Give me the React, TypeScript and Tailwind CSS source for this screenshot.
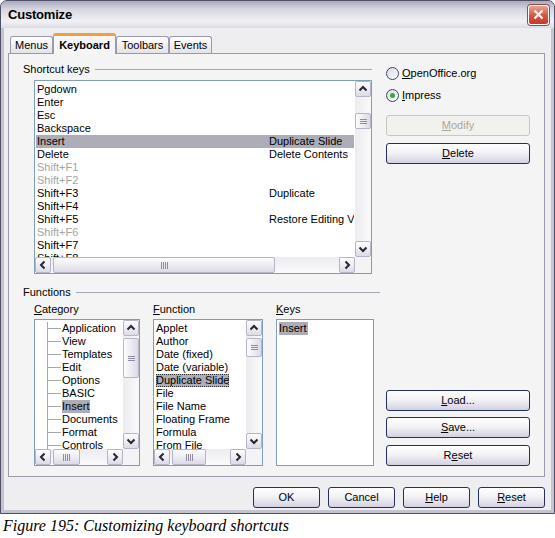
import React from "react";

type Dir = "up" | "down" | "left" | "right";

const arrowPath: Record<Dir, string> = {
  up: "M3.5 8.5 L7 5 L10.5 8.5",
  down: "M3.5 5.5 L7 9 L10.5 5.5",
  left: "M8.5 3.5 L5 7 L8.5 10.5",
  right: "M5.5 3.5 L9 7 L5.5 10.5",
};

function ScrollButton({ dir }: { dir: Dir }) {
  return (
    <div className="w-[16px] h-[16px] shrink-0 flex items-center justify-center rounded-[2px] border border-[#b6b5c8] bg-[linear-gradient(to_bottom,#ffffff,#dcdbe6)]">
      <svg width="14" height="14" viewBox="0 0 14 14">
        <path d={arrowPath[dir]} fill="none" stroke="#262633" strokeWidth="2" />
      </svg>
    </div>
  );
}

function VScroll({ thumb }: { thumb: string }) {
  return (
    <div className="w-[16px] h-full shrink-0 flex flex-col bg-[linear-gradient(to_right,#ececf0,#fafafb)]">
      <ScrollButton dir="up" />
      <div
        className={`w-[16px] shrink-0 rounded-[2px] border border-[#b6b5c8] bg-[linear-gradient(to_right,#fdfdfe,#dcdbe6)] flex flex-col items-center justify-center gap-[1px] ${thumb}`}
      >
        <div className="w-[7px] h-px bg-[#8c8c9c]" />
        <div className="w-[7px] h-px bg-[#8c8c9c]" />
        <div className="w-[7px] h-px bg-[#8c8c9c]" />
      </div>
      <div className="flex-1" />
      <ScrollButton dir="down" />
    </div>
  );
}

function HScroll({ thumb }: { thumb: string }) {
  return (
    <div className="h-[16px] flex-1 flex bg-[linear-gradient(to_bottom,#ececf0,#fafafb)]">
      <ScrollButton dir="left" />
      <div
        className={`h-[16px] shrink-0 rounded-[2px] border border-[#b6b5c8] bg-[linear-gradient(to_bottom,#fdfdfe,#dcdbe6)] flex items-center justify-center gap-[1px] ${thumb}`}
      >
        <div className="h-[7px] w-px bg-[#8c8c9c]" />
        <div className="h-[7px] w-px bg-[#8c8c9c]" />
        <div className="h-[7px] w-px bg-[#8c8c9c]" />
        <div className="h-[7px] w-px bg-[#8c8c9c]" />
      </div>
      <div className="flex-1" />
      <ScrollButton dir="right" />
    </div>
  );
}

function XpButton({
  children,
  disabled,
  className = "",
}: {
  children: React.ReactNode;
  disabled?: boolean;
  className?: string;
}) {
  return (
    <div
      className={`h-[21px] shrink-0 flex items-center justify-center rounded-[3px] border ${
        disabled
          ? "border-[#c9c8c0] bg-[#f1f1ed] text-[#aca899]"
          : "border-[#24305e] bg-[linear-gradient(to_bottom,#ffffff_0%,#f3f3f6_45%,#d3d1e2_100%)] text-black"
      } ${className}`}
    >
      {children}
    </div>
  );
}

function Radio({ checked, children }: { checked?: boolean; children: React.ReactNode }) {
  return (
    <div className="flex items-center h-[14px] gap-[3px]">
      <div className="w-[13px] h-[13px] rounded-full border border-[#34496e] bg-[linear-gradient(135deg,#d8d8e2,#ffffff)] flex items-center justify-center">
        {checked && <div className="w-[5px] h-[5px] rounded-full bg-[#3aa83a]" />}
      </div>
      <span>{children}</span>
    </div>
  );
}

function Header({ label, className }: { label: string; className: string }) {
  return (
    <div className={`flex items-center h-[14px] ${className}`}>
      <span className="whitespace-nowrap">{label}</span>
      <div className="flex-1 ml-[5px] h-px bg-[#a6a6b4]" />
    </div>
  );
}

const shortcuts: { key: string; fn?: string; sel?: boolean; dis?: boolean }[] = [
  { key: "Pgdown" },
  { key: "Enter" },
  { key: "Esc" },
  { key: "Backspace" },
  { key: "Insert", fn: "Duplicate Slide", sel: true },
  { key: "Delete", fn: "Delete Contents" },
  { key: "Shift+F1", dis: true },
  { key: "Shift+F2", dis: true },
  { key: "Shift+F3", fn: "Duplicate" },
  { key: "Shift+F4" },
  { key: "Shift+F5", fn: "Restore Editing View" },
  { key: "Shift+F6", dis: true },
  { key: "Shift+F7" },
  { key: "Shift+F8" },
];

const categories = [
  "Application",
  "View",
  "Templates",
  "Edit",
  "Options",
  "BASIC",
  "Insert",
  "Documents",
  "Format",
  "Controls",
];

const functions = [
  "Applet",
  "Author",
  "Date (fixed)",
  "Date (variable)",
  "Duplicate Slide",
  "File",
  "File Name",
  "Floating Frame",
  "Formula",
  "From File",
];

const tabs = [
  { label: "Menus", w: "w-[43px]" },
  { label: "Keyboard", w: "w-[63px]", active: true },
  { label: "Toolbars", w: "w-[53px]" },
  { label: "Events", w: "w-[43px]" },
];

export default function App() {
  return (
    <div className="w-[555px] h-[538px] bg-white font-['Liberation_Sans',Arial,sans-serif] text-[11px] leading-[13px] text-black overflow-hidden">
      {/* window */}
      <div className="w-[555px] h-[514px] flex flex-col border border-[#4f4f66] rounded-t-[7px] overflow-hidden bg-[#c4c4d0]">
        <div className="h-[27px] shrink-0 flex items-center justify-between pl-[7px] pr-[5px] bg-[linear-gradient(to_bottom,#a9a8be_0%,#d6d6e0_30%,#f1f1f5_75%,#dcdce4_100%)]">
          <span className="text-[13px] font-bold tracking-[-0.2px]">Customize</span>
          <div className="w-[21px] h-[20px] rounded-[3px] border border-white bg-[linear-gradient(to_bottom,#eba391,#d2543f_55%,#c23c2a)] flex items-center justify-center shadow-[0_0_0_1px_#9a4a44]">
            <svg width="13" height="13" viewBox="0 0 13 13">
              <path d="M2.5 2.5 L10.5 10.5 M10.5 2.5 L2.5 10.5" stroke="white" strokeWidth="2.2" />
            </svg>
          </div>
        </div>

        <div className="flex-1 mx-[3px] mb-[3px] bg-[#eeeef0] flex flex-col pt-[5px]">
          {/* tabs */}
          <div className="h-[20px] flex items-end pl-[6px] relative z-10">
            {tabs.map((t) =>
              t.active ? (
                <div
                  key={t.label}
                  className={`${t.w} h-[21px] -mb-px flex items-center justify-center font-bold rounded-t-[3px] border-x border-[#9a9aac] border-t-[3px] border-t-[#f0a03a] bg-[#f6f6f6]`}
                >
                  {t.label}
                </div>
              ) : (
                <div
                  key={t.label}
                  className={`${t.w} h-[17px] flex items-center justify-center rounded-t-[3px] border-x border-t border-[#9a9aac] bg-[linear-gradient(to_bottom,#ffffff,#e2e2e8)]`}
                >
                  {t.label}
                </div>
              )
            )}
          </div>

          {/* tab panel */}
          <div className="ml-[4px] mr-[6px] h-[424px] shrink-0 border border-[#9a9aac] bg-[#f4f4f4] flex pl-[14px] pr-[14px] pt-[8px] pb-[10px] gap-[6px]">
            {/* left column */}
            <div className="w-[357px] flex flex-col">
              <Header label="Shortcut keys" className="w-[349px]" />
              <div className="mt-[4px] ml-[11px] w-[338px] h-[194px] border border-[#7f9db9] bg-white flex flex-col">
                <div className="h-[176px] flex">
                  <div className="flex-1 overflow-hidden pt-[2px]">
                    {shortcuts.map((r) => (
                      <div
                        key={r.key}
                        className={`h-[13px] mx-[1px] flex whitespace-nowrap ${r.sel ? "bg-[#adadb8]" : ""} ${
                          r.dis ? "text-[#a4a4a4]" : ""
                        }`}
                      >
                        <span className="w-[233px] shrink-0 pl-[1px]">{r.key}</span>
                        <span className="overflow-hidden">{r.fn ?? ""}</span>
                      </div>
                    ))}
                  </div>
                  <VScroll thumb="mt-[16px] h-[16px]" />
                </div>
                <div className="h-[16px] flex">
                  <HScroll thumb="ml-[2px] w-[222px]" />
                  <div className="w-[16px] bg-[#f4f4f6]" />
                </div>
              </div>

              <Header label="Functions" className="mt-[11px] w-[357px]" />
              <div className="mt-[3px] h-[14px] flex items-center pl-[11px] gap-[13px]">
                <span className="w-[106px]">
                  <u>C</u>ategory
                </span>
                <span className="w-[110px]">
                  <u>F</u>unction
                </span>
                <span className="w-[98px]">
                  <u>K</u>eys
                </span>
              </div>
              <div className="mt-[3px] h-[147px] flex pl-[11px] gap-[13px]">
                {/* category */}
                <div className="w-[106px] h-full border border-[#7f9db9] bg-white flex flex-col">
                  <div className="h-[129px] flex">
                    <div className="flex-1 overflow-hidden pt-[2px]">
                      {categories.map((c) => (
                        <div key={c} className="h-[13px] flex whitespace-nowrap">
                          <div className="w-[12px] shrink-0" />
                          <div className="w-[14px] shrink-0 border-l border-[#a8a8a8] flex items-center">
                            <div className="w-full h-px bg-[#a8a8a8]" />
                          </div>
                          <span className={`ml-[1px] ${c === "Insert" ? "bg-[#adadb8]" : ""}`}>{c}</span>
                        </div>
                      ))}
                    </div>
                    <VScroll thumb="mt-[2px] h-[40px]" />
                  </div>
                  <div className="h-[16px] flex">
                    <HScroll thumb="ml-[2px] w-[27px]" />
                    <div className="w-[16px] bg-[#f4f4f6]" />
                  </div>
                </div>
                {/* function */}
                <div className="w-[110px] h-full border border-[#7f9db9] bg-white flex flex-col">
                  <div className="h-[129px] flex">
                    <div className="flex-1 overflow-hidden pt-[2px] pl-[2px]">
                      {functions.map((f) => (
                        <div key={f} className="h-[13px] flex whitespace-nowrap">
                          <span
                            className={
                              f === "Duplicate Slide"
                                ? "bg-[#adadb8] outline outline-1 outline-dotted outline-[#303030] -outline-offset-1"
                                : ""
                            }
                          >
                            {f}
                          </span>
                        </div>
                      ))}
                    </div>
                    <VScroll thumb="mt-[2px] h-[19px]" />
                  </div>
                  <div className="h-[16px] flex">
                    <HScroll thumb="ml-[2px] w-[34px]" />
                    <div className="w-[16px] bg-[#f4f4f6]" />
                  </div>
                </div>
                {/* keys */}
                <div className="w-[98px] h-full border border-[#7f9db9] bg-white pt-[2px] pl-[2px]">
                  <div className="h-[13px] flex">
                    <span className="bg-[#adadb8] pr-[1px]">Insert</span>
                  </div>
                </div>
              </div>
            </div>

            {/* right column */}
            <div className="w-[144px] flex flex-col">
              <div className="mt-[4px]">
                <Radio>
                  <u>O</u>penOffice.org
                </Radio>
              </div>
              <div className="mt-[8px]">
                <Radio checked>
                  <u>I</u>mpress
                </Radio>
              </div>
              <XpButton disabled className="mt-[13px]">
                <span>
                  <u>M</u>odify
                </span>
              </XpButton>
              <XpButton className="mt-[7px]">
                <span>
                  <u>D</u>elete
                </span>
              </XpButton>
              <div className="flex-1" />
              <XpButton>
                <span>
                  <u>L</u>oad...
                </span>
              </XpButton>
              <XpButton className="mt-[6px]">
                <span>
                  <u>S</u>ave...
                </span>
              </XpButton>
              <XpButton className="mt-[7px]">
                <span>
                  R<u>e</u>set
                </span>
              </XpButton>
            </div>
          </div>

          {/* dialog buttons */}
          <div className="mt-[10px] mr-[6px] flex justify-end gap-[8px]">
            <XpButton className="w-[67px]">OK</XpButton>
            <XpButton className="w-[67px]">Cancel</XpButton>
            <XpButton className="w-[67px]">
              <span>
                <u>H</u>elp
              </span>
            </XpButton>
            <XpButton className="w-[67px]">
              <span>
                <u>R</u>eset
              </span>
            </XpButton>
          </div>
        </div>
      </div>

      <div className="h-[24px] flex items-center pl-[3px] font-['Liberation_Serif','Times_New_Roman',serif] italic text-[16px] leading-[18px]">
        Figure 195: Customizing keyboard shortcuts
      </div>
    </div>
  );
}
